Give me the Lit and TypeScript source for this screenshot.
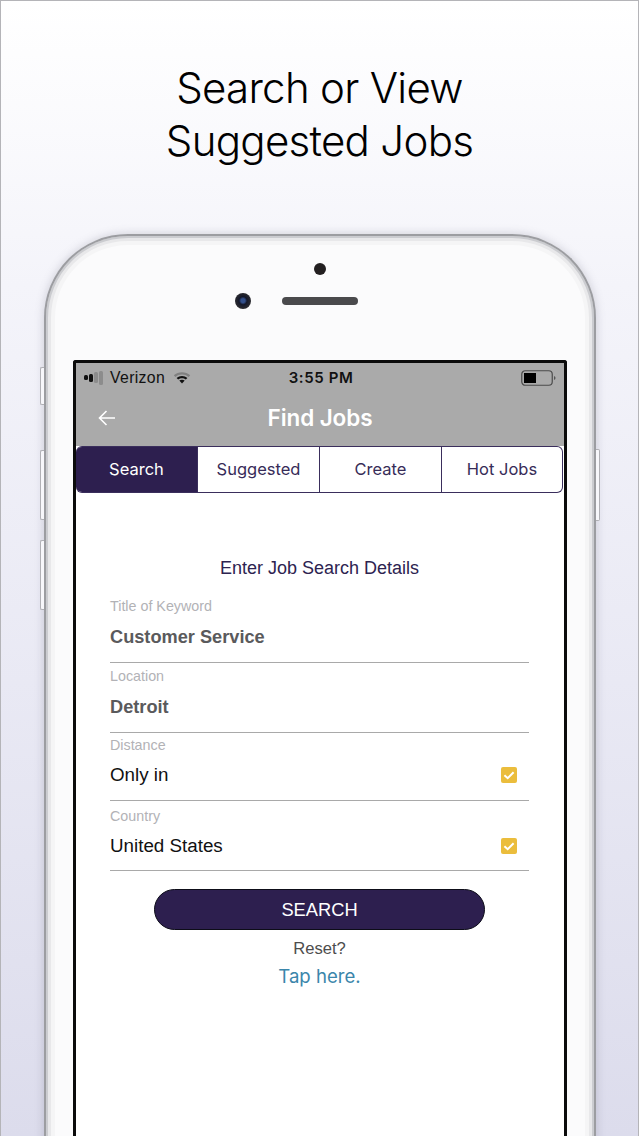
import { LitElement, html, css, svg } from "lit";
import { customElement } from "lit/decorators.js";

const check = svg`<svg class="chk" viewBox="0 0 16 16" width="16" height="16"><rect width="16" height="16" rx="2" fill="#ebbd3c"/><path d="M3.4 8.2 6.7 11.2 12.6 5.2" fill="none" stroke="#fff" stroke-width="2"/></svg>`;

@customElement("app-root")
export class AppRoot extends LitElement {
  static styles = css`
    :host { display: block; width: 639px; height: 1136px; overflow: hidden; box-sizing: border-box; position: relative;
      background: linear-gradient(180deg, #ffffff 0%, #f4f4fa 25%, #e9e9f4 60%, #dcdcec 100%);
      border: 1px solid #b4b4b8; border-bottom: 0; font-family: "Liberation Sans", Arial, sans-serif; }
    h1 { margin: 0; padding-top: 60px; height: 233px; box-sizing: border-box; text-align: center;
      font: 300 42px/53px "Inter", sans-serif; letter-spacing: -0.7px; color: #000; }
    .phone { position: relative; box-sizing: border-box; margin: 0 0 0 43px; width: 552px; height: 980px;
      background: #fbfbfc; border: 2px solid #9c9da1; border-bottom: 0; border-radius: 84px 84px 0 0;
      box-shadow: 0 0 10px rgba(110,110,130,.3), inset 0 0 0 2px #cbccd0, inset 0 0 0 5px #e8e8ea, inset 0 0 0 9px #f5f5f6;
      padding: 124px 27px 0; }
    .sidebtn { position: absolute; width: 3px; border: 1px solid #b0b0b5; border-right: 0; border-radius: 2px 0 0 2px; background: #f7f7fb; left: -6px; box-sizing: content-box; }
    .sidebtn.r { left: auto; right: -6px; border: 1px solid #b0b0b5; border-left: 0; border-radius: 0 2px 2px 0; }
    .dot { position: absolute; left: 268px; top: 27px; width: 12px; height: 12px; border-radius: 50%; background: #231f20; }
    .cam { position: absolute; left: 189px; top: 57px; width: 16px; height: 16px; border-radius: 50%;
      background: radial-gradient(circle at 50% 48%, #33508c 0 2px, #14182a 4px, #2b2b30 8px); }
    .speaker { position: absolute; left: 236px; top: 61px; width: 76px; height: 8px; border-radius: 4px; background: #4a4a4c; }
    .screen { box-sizing: border-box; width: 494px; height: 860px; border: 3px solid #0b0b0b; border-bottom: 0; border-radius: 3px 3px 0 0; background: #fff; }
    .top { background: #aaaaaa; height: 83px; display: flex; flex-direction: column; }
    .status { height: 29px; display: grid; grid-template-columns: 1fr auto 1fr; align-items: center; padding: 0 8px; font-size: 15.8px; color: #111; }
    .left { display: flex; align-items: center; }
    .bars { display: flex; align-items: center; gap: 1px; margin-right: 5px; width: 21px; }
    .bars i { width: 4px; background: #111; border-radius: 1.5px; }
    .bars i.off { background: #8c8c8c; }
    .carrier { letter-spacing: .35px; margin-right: 8px; }
    .time { font: 600 15px "Inter", sans-serif; letter-spacing: .6px; padding-left: 2px; }
    .right { display: flex; justify-content: flex-end; margin-right: -1px; }
    .nav { position: relative; flex: 1; display: flex; align-items: center; justify-content: center; color: #fff; font: 600 22.5px "Inter", sans-serif; padding-bottom: 3px; letter-spacing: -0.1px; }
    .back { position: absolute; left: 21px; top: 17px; }
    .tabs { display: grid; grid-template-columns: 122px 122px 122px 1fr; height: 47px; margin-right: 1px; background: #fff;
      border: 1px solid #3a2e5c; border-left: 0; border-radius: 6px; overflow: hidden; box-sizing: border-box; font: 400 16.5px "Inter", sans-serif; color: #372c58; }
    .tabs div { display: flex; align-items: center; justify-content: center; border-right: 1px solid #3a2e5c; padding-bottom: 2px; }
    .tabs div:last-child { border-right: 0; }
    .tabs .on { background: #2d1f4f; color: #fff; }
    .form { padding: 63px 35px 0 34px; }
    .heading { text-align: center; font-size: 18px; line-height: 24px; color: #2d2350; margin-bottom: 19px; }
    .field { border-bottom: 1px solid #a9a9a9; box-sizing: border-box; }
    .lbl { font-size: 14.3px; line-height: 16px; margin-top: -1px; color: #b2b2b6; }
    .val { display: flex; justify-content: space-between; align-items: center; font-size: 18.8px; color: #111; margin-top: 11px; }
    .val.b { font-weight: 700; font-size: 18.2px; color: #5a5a5c; margin-top: 13px; }
    .chk { margin-right: 12px; }
    .btn { box-sizing: border-box; width: 331px; height: 41px; margin: 18px auto 0; border-radius: 21px; border: 1px solid #0d0d18; background: #2d1f4f; color: #fff; display: flex; align-items: center; justify-content: center; font-size: 18.3px; }
    .reset { text-align: center; font-size: 16.6px; line-height: 20px; color: #4d4d4d; margin-top: 9px; }
    .tap { text-align: center; font: 400 18.6px/24px "Inter", "Liberation Sans", sans-serif; color: #3b86ab; margin-top: 5px; }
  `;

  field(label: string, value: string, h: number, pad: number, bold = false, chk = false) {
    return html`<div class="field" style="height:${h}px;padding-top:${pad}px">
      <div class="lbl">${label}</div>
      <div class="val ${bold ? "b" : ""}"><span>${value}</span>${chk ? check : ""}</div>
    </div>`;
  }

  render() {
    return html`
      <h1>Search or View<br />Suggested Jobs</h1>
      <div class="phone">
        <span class="sidebtn" style="top:131px;height:36px"></span>
        <span class="sidebtn" style="top:214px;height:68px"></span>
        <span class="sidebtn" style="top:304px;height:68px"></span>
        <span class="sidebtn r" style="top:213px;height:70px"></span>
        <span class="dot"></span><span class="cam"></span><span class="speaker"></span>
        <div class="screen">
          <div class="top">
            <div class="status">
              <div class="left">
                <div class="bars"><i style="height:5px"></i><i style="height:8px"></i><i class="off" style="height:11px"></i><i class="off" style="height:14px"></i></div>
                <span class="carrier">Verizon</span>
                <svg width="18" height="13" viewBox="0 0 18 13"><path d="M0.8 4.2C5.2.1 12.8.1 17.2 4.2L15.6 5.9C12 2.6 6 2.6 2.4 5.9Z" fill="#808080"/><path d="M3.6 6.9C6.5 4.2 11.5 4.2 14.4 6.9L12.8 8.6C10.6 6.7 7.4 6.7 5.2 8.6Z" fill="#111"/><path d="M6.3 9.6C7.8 8.3 10.2 8.3 11.7 9.6L9 12.4Z" fill="#111"/></svg>
              </div>
              <div class="time">3:55 PM</div>
              <div class="right">
                <svg width="36" height="16" viewBox="0 0 36 16"><rect x=".75" y=".75" width="30.5" height="14.5" rx="3.5" fill="none" stroke="#4b4b4b" stroke-width="1.2"/><rect x="3" y="3" width="12" height="10" fill="#000"/><path d="M33 6v4l1.4-1V7z" fill="#555"/></svg>
              </div>
            </div>
            <div class="nav">
              <svg class="back" width="20" height="18" viewBox="0 0 20 18"><path d="M18 9H3M9.5 2 2.5 9l7 7" fill="none" stroke="#fff" stroke-width="1.6"/></svg>
              Find Jobs
            </div>
          </div>
          <div class="tabs">
            <div class="on">Search</div><div>Suggested</div><div>Create</div><div>Hot Jobs</div>
          </div>
          <div class="form">
            <div class="heading">Enter Job Search Details</div>
            ${this.field("Title of Keyword", "Customer Service", 65, 0, true)}
            ${this.field("Location", "Detroit", 70, 6, true)}
            ${this.field("Distance", "Only in", 68, 5, false, true)}
            ${this.field("Country", "United States", 70, 8, false, true)}
            <div class="btn">SEARCH</div>
            <div class="reset">Reset?</div>
            <div class="tap">Tap here.</div>
          </div>
        </div>
      </div>
    `;
  }
}
